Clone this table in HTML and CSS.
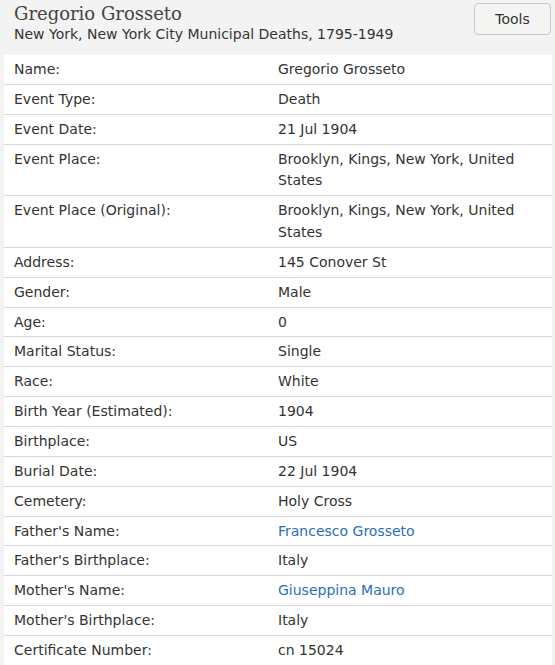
FILE: index.html
```html
<!DOCTYPE html>
<html lang="en">
<head>
  <meta charset="UTF-8" />
  <title>Gregorio Grosseto</title>
  <link rel="stylesheet" href="styles.css">
</head>
<body>
  <!-- Record header -->
  <div class="record-header">
    <div class="record-title">
      <h1>Gregorio Grosseto</h1>
      <div class="collection">New York, New York City Municipal Deaths, 1795-1949</div>
    </div>
    <button class="tools-btn">Tools</button>
  </div>

  <!-- Record details -->
  <div class="record-panel">
    <table class="record-table">
      <tbody>
        <tr><td>Name:</td><td>Gregorio Grosseto</td></tr>
        <tr><td>Event Type:</td><td>Death</td></tr>
        <tr><td>Event Date:</td><td>21 Jul 1904</td></tr>
        <tr><td>Event Place:</td><td>Brooklyn, Kings, New York, United States</td></tr>
        <tr><td>Event Place (Original):</td><td>Brooklyn, Kings, New York, United States</td></tr>
        <tr><td>Address:</td><td>145 Conover St</td></tr>
        <tr><td>Gender:</td><td>Male</td></tr>
        <tr><td>Age:</td><td>0</td></tr>
        <tr><td>Marital Status:</td><td>Single</td></tr>
        <tr><td>Race:</td><td>White</td></tr>
        <tr><td>Birth Year (Estimated):</td><td>1904</td></tr>
        <tr><td>Birthplace:</td><td>US</td></tr>
        <tr><td>Burial Date:</td><td>22 Jul 1904</td></tr>
        <tr><td>Cemetery:</td><td>Holy Cross</td></tr>
        <tr><td>Father's Name:</td><td><a href="#">Francesco Grosseto</a></td></tr>
        <tr><td>Father's Birthplace:</td><td>Italy</td></tr>
        <tr><td>Mother's Name:</td><td><a href="#">Giuseppina Mauro</a></td></tr>
        <tr><td>Mother's Birthplace:</td><td>Italy</td></tr>
        <tr><td>Certificate Number:</td><td>cn 15024</td></tr>
      </tbody>
    </table>
  </div>
</body>
</html>
```

FILE: styles.css
```css
body {
  font-family: 'DejaVu Sans', Verdana, sans-serif;
  font-size: 14px;
  background: #f3f3f3;
  margin: 0;
  padding: 0 3px 0 4px;
  color: #333;
}

.record-header {
  display: flex;
  justify-content: space-between;
  align-items: flex-start;
  padding: 3px 1px 0 10px;
  height: 52px;
  box-sizing: border-box;
}

h1 {
  font-family: 'DejaVu Serif', Georgia, serif;
  font-weight: normal;
  font-size: 18px;
  line-height: 22px;
  margin: 0;
  color: #444;
}

.collection {
  font-size: 14px;
  line-height: 19px;
  color: #333;
}

.tools-btn {
  font-family: inherit;
  font-size: 14px;
  color: #333;
  background: #f4f4f2;
  border: 1px solid #c8c8c8;
  border-radius: 4px;
  width: 77px;
  height: 32px;
  cursor: pointer;
}

.record-panel {
  background: white;
  margin-top: 3px;
}

.record-table {
  width: 100%;
  border-collapse: collapse;
}

.record-table td {
  padding: 4px 10px 3px 10px;
  line-height: 21.85px;
  vertical-align: top;
  border-bottom: 1px solid #d8d8d8;
}

.record-table td:first-child {
  width: 244px;
}

.record-table a {
  color: #2a6ebb;
  text-decoration: none;
}
```
